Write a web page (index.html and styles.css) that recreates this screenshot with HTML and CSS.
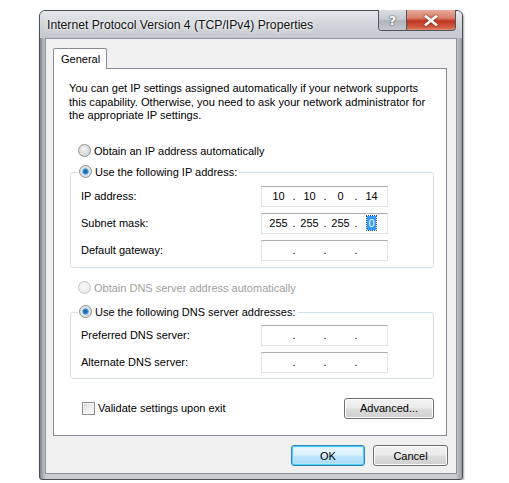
FILE: index.html
```html
<!DOCTYPE html>
<html>
<head>
<meta charset="utf-8">
<link rel="stylesheet" href="styles.css">
</head>
<body>
<div class="window">
  <div class="titlebar">
    <span class="title">Internet Protocol Version 4 (TCP/IPv4) Properties</span>
    <div class="caption-buttons">
      <div class="cbtn help">?</div>
      <div class="cbtn close">
        <svg width="14" height="11" viewBox="0 0 14 11"><path d="M2 1.5 L12 9.5 M12 1.5 L2 9.5" stroke="#fff" stroke-width="2.6" stroke-linecap="square"/></svg>
      </div>
    </div>
  </div>
  <div class="client">
    <div class="tabs"><div class="tab">General</div></div>
    <div class="panel">
      <p class="desc">You can get IP settings assigned automatically if your network supports this capability. Otherwise, you need to ask your network administrator for the appropriate IP settings.</p>
      <div class="radio-row r-ip-auto"><span class="radio"></span><span>Obtain an IP address automatically</span></div>
      <div class="group g-ip">
        <div class="legend"><span class="radio checked"></span><span>Use the following IP address:</span></div>
        <div class="field-row first"><span class="lbl">IP address:</span>
          <div class="ipbox"><span class="seg">10</span><span class="dot">.</span><span class="seg">10</span><span class="dot">.</span><span class="seg">0</span><span class="dot">.</span><span class="seg">14</span></div>
        </div>
        <div class="field-row"><span class="lbl">Subnet mask:</span>
          <div class="ipbox"><span class="seg">255</span><span class="dot">.</span><span class="seg">255</span><span class="dot">.</span><span class="seg">255</span><span class="dot">.</span><span class="seg"><span class="sel">0</span></span></div>
        </div>
        <div class="field-row"><span class="lbl">Default gateway:</span>
          <div class="ipbox"><span class="seg"></span><span class="dot">.</span><span class="seg"></span><span class="dot">.</span><span class="seg"></span><span class="dot">.</span><span class="seg"></span></div>
        </div>
      </div>
      <div class="radio-row r-dns-auto disabled"><span class="radio"></span><span>Obtain DNS server address automatically</span></div>
      <div class="group g-dns">
        <div class="legend"><span class="radio checked"></span><span>Use the following DNS server addresses:</span></div>
        <div class="field-row first"><span class="lbl">Preferred DNS server:</span>
          <div class="ipbox"><span class="seg"></span><span class="dot">.</span><span class="seg"></span><span class="dot">.</span><span class="seg"></span><span class="dot">.</span><span class="seg"></span></div>
        </div>
        <div class="field-row"><span class="lbl">Alternate DNS server:</span>
          <div class="ipbox"><span class="seg"></span><span class="dot">.</span><span class="seg"></span><span class="dot">.</span><span class="seg"></span><span class="dot">.</span><span class="seg"></span></div>
        </div>
      </div>
      <div class="bottom-row">
        <div class="check-row"><span class="checkbox"></span><span>Validate settings upon exit</span></div>
        <button class="btn advanced">Advanced...</button>
      </div>
    </div>
    <div class="footer">
      <button class="btn ok">OK</button>
      <button class="btn cancel">Cancel</button>
    </div>
  </div>
</div>
</body>
</html>
```
FILE: styles.css
```css
* { box-sizing: border-box; }
html, body { margin: 0; padding: 0; background: #ffffff; }
body {
  font-family: "Liberation Sans", Arial, sans-serif;
  font-size: 11px;
  color: #000;
}
.window {
  margin: 10px 0 0 39px;
  width: 424px;
  height: 470px;
  border: 1px solid #4a4f55;
  border-radius: 6px 6px 3px 3px;
  background: linear-gradient(to right, #7f858b 0px, #aab0b6 3px, #c9cdd2 6px, #c9cdd2 calc(100% - 6px), #b8bdc3 calc(100% - 4px), #9a9fa5 100%);
  display: flex;
  flex-direction: column;
  box-shadow: 1px 1px 2px rgba(0,0,0,0.35);
}
.titlebar {
  height: 27px;
  flex: none;
  display: flex;
  justify-content: space-between;
  align-items: flex-start;
  padding: 0 6px 0 7px;
  background: linear-gradient(to bottom, #e4e7ea 0%, #d3d7dc 45%, #c3c8ce 100%);
  border-radius: 5px 5px 0 0;
}
.title {
  font-size: 12.2px;
  line-height: 12px;
  margin-top: 8px;
  color: #111;
  text-shadow: 0 0 6px #fff, 0 0 3px #fff;
}
.caption-buttons {
  display: flex;
  margin-top: -1px;
  border: 1px solid #50555b;
  border-top: none;
  border-radius: 0 0 4px 4px;
  overflow: hidden;
  height: 21px;
}
.cbtn {
  height: 20px;
  display: flex;
  align-items: center;
  justify-content: center;
}
.help {
  width: 28px;
  background: linear-gradient(to bottom, #dbdee2 0%, #c7cbd0 45%, #b0b5bb 55%, #c4c8cd 100%);
  border-right: 1px solid #50555b;
  color: #fff;
  font-family: "DejaVu Sans", sans-serif;
  font-weight: bold;
  font-size: 13px;
  text-shadow: 0 0 2px #555, 0 0 1px #333;
}
.close {
  width: 48px;
  background: linear-gradient(to bottom, #e9a99d 0%, #d9806c 40%, #c1361f 55%, #cd5a40 85%, #e08a70 100%);
}
.close svg { filter: drop-shadow(0 0 1px #6a1a10); }
.client {
  flex: 1;
  margin: 0 5px 5px 5px;
  background: #f0f0f0;
  border: 1px solid #8e9399;
  padding: 9px 9px 0 7px;
  display: flex;
  flex-direction: column;
}
.tabs {
  display: flex;
  height: 20px;
  position: relative;
  z-index: 1;
}
.tab {
  width: 54px;
  height: 21px;
  background: #fff;
  border: 1px solid #898c95;
  border-bottom: none;
  border-radius: 2px 2px 0 0;
  padding: 3px 0 0 7px;
  line-height: 14px;
}
.panel {
  width: 394px;
  height: 368px;
  background: #fff;
  border: 1px solid #898c95;
  padding: 13px 0 0 15px;
  display: flex;
  flex-direction: column;
}
.desc {
  margin: 0;
  width: 362px;
  font-size: 11.1px;
  line-height: 13.5px;
}
.radio-row, .legend, .check-row {
  display: flex;
  align-items: center;
  height: 16px;
  gap: 3px;
}
.radio-row { margin-left: 9px; }
.r-ip-auto { margin-top: 20px; }
.r-dns-auto { margin-top: 12px; }
.disabled { color: #a0a0a0; }
.radio {
  width: 13px;
  height: 13px;
  border-radius: 50%;
  border: 1px solid #8e8f8f;
  background: radial-gradient(circle at 45% 40%, #f4f4f4 0%, #dcdcdc 55%, #c9c9c9 100%);
  flex: none;
}
.disabled .radio {
  border-color: #c6c6c6;
  background: radial-gradient(circle at 45% 40%, #fafafa 0%, #ececec 60%, #e2e2e2 100%);
}
.radio.checked {
  background: radial-gradient(circle at 50% 50%, #17609b 0%, #2a85c9 28%, #5aa8dc 36%, #d8dde2 45%, #eef0f2 100%);
}
.group {
  width: 364px;
  margin-left: 1px;
  border: 1px solid #d5dfe5;
  border-radius: 3px;
  padding: 0 0 0 10px;
  display: flex;
  flex-direction: column;
}
.g-ip { margin-top: 13px; padding-bottom: 6px; }
.g-dns { margin-top: 16px; padding-bottom: 5px; }
.legend {
  margin: -9px 0 0 -3px;
  padding: 0 2px 0 1px;
  background: #fff;
  align-self: flex-start;
  width: max-content;
}
.field-row {
  display: flex;
  align-items: center;
  height: 21px;
  margin-top: 6px;
}
.g-ip .field-row.first { margin-top: 6px; }
.g-dns .field-row.first { margin-top: 5px; }
.lbl { width: 180px; }
.ipbox {
  width: 127px;
  height: 21px;
  border: 1px solid #e2e3ea;
  border-top-color: #abadb3;
  background: #fff;
  display: flex;
  align-items: center;
  padding-left: 4px;
}
.seg {
  width: 25px;
  text-align: center;
  display: flex;
  justify-content: center;
}
.dot { width: 6px; text-align: center; }
.sel {
  background: #3399ff;
  color: #fff;
  padding: 1px 1px;
  outline: 1px dotted #1a4f8a;
  line-height: 12px;
}
.bottom-row {
  margin-top: 19px;
  width: 365px;
  display: flex;
  justify-content: space-between;
  align-items: center;
}
.check-row { margin-left: 13px; }
.checkbox {
  width: 13px;
  height: 13px;
  border: 1px solid #8f8f8f;
  background: linear-gradient(135deg, #d9d9d9 0%, #f2f2f2 60%, #fafafa 100%);
  box-shadow: inset 0 0 0 1px #f4f4f4;
  flex: none;
}
.btn {
  font-family: inherit;
  font-size: 11px;
  color: #000;
  height: 21px;
  border: 1px solid #707070;
  border-radius: 3px;
  background: linear-gradient(to bottom, #f2f2f2 0%, #ebebeb 48%, #dddddd 52%, #cfcfcf 100%);
  box-shadow: inset 0 0 0 1px #fcfcfc;
  padding: 0;
}
.advanced { width: 90px; }
.footer {
  display: flex;
  justify-content: flex-end;
  gap: 8px;
  margin-top: 9px;
  width: 395px;
}
.ok {
  width: 74px;
  border-color: #3c7fb1;
  box-shadow: inset 0 0 0 1px #48d5fd, inset 0 0 0 2px rgba(190,235,250,0.6);
  background: linear-gradient(to bottom, #eaf6fd 0%, #d9f0fc 48%, #bee6fd 52%, #a7d9f5 100%);
}
.cancel { width: 75px; }
```
